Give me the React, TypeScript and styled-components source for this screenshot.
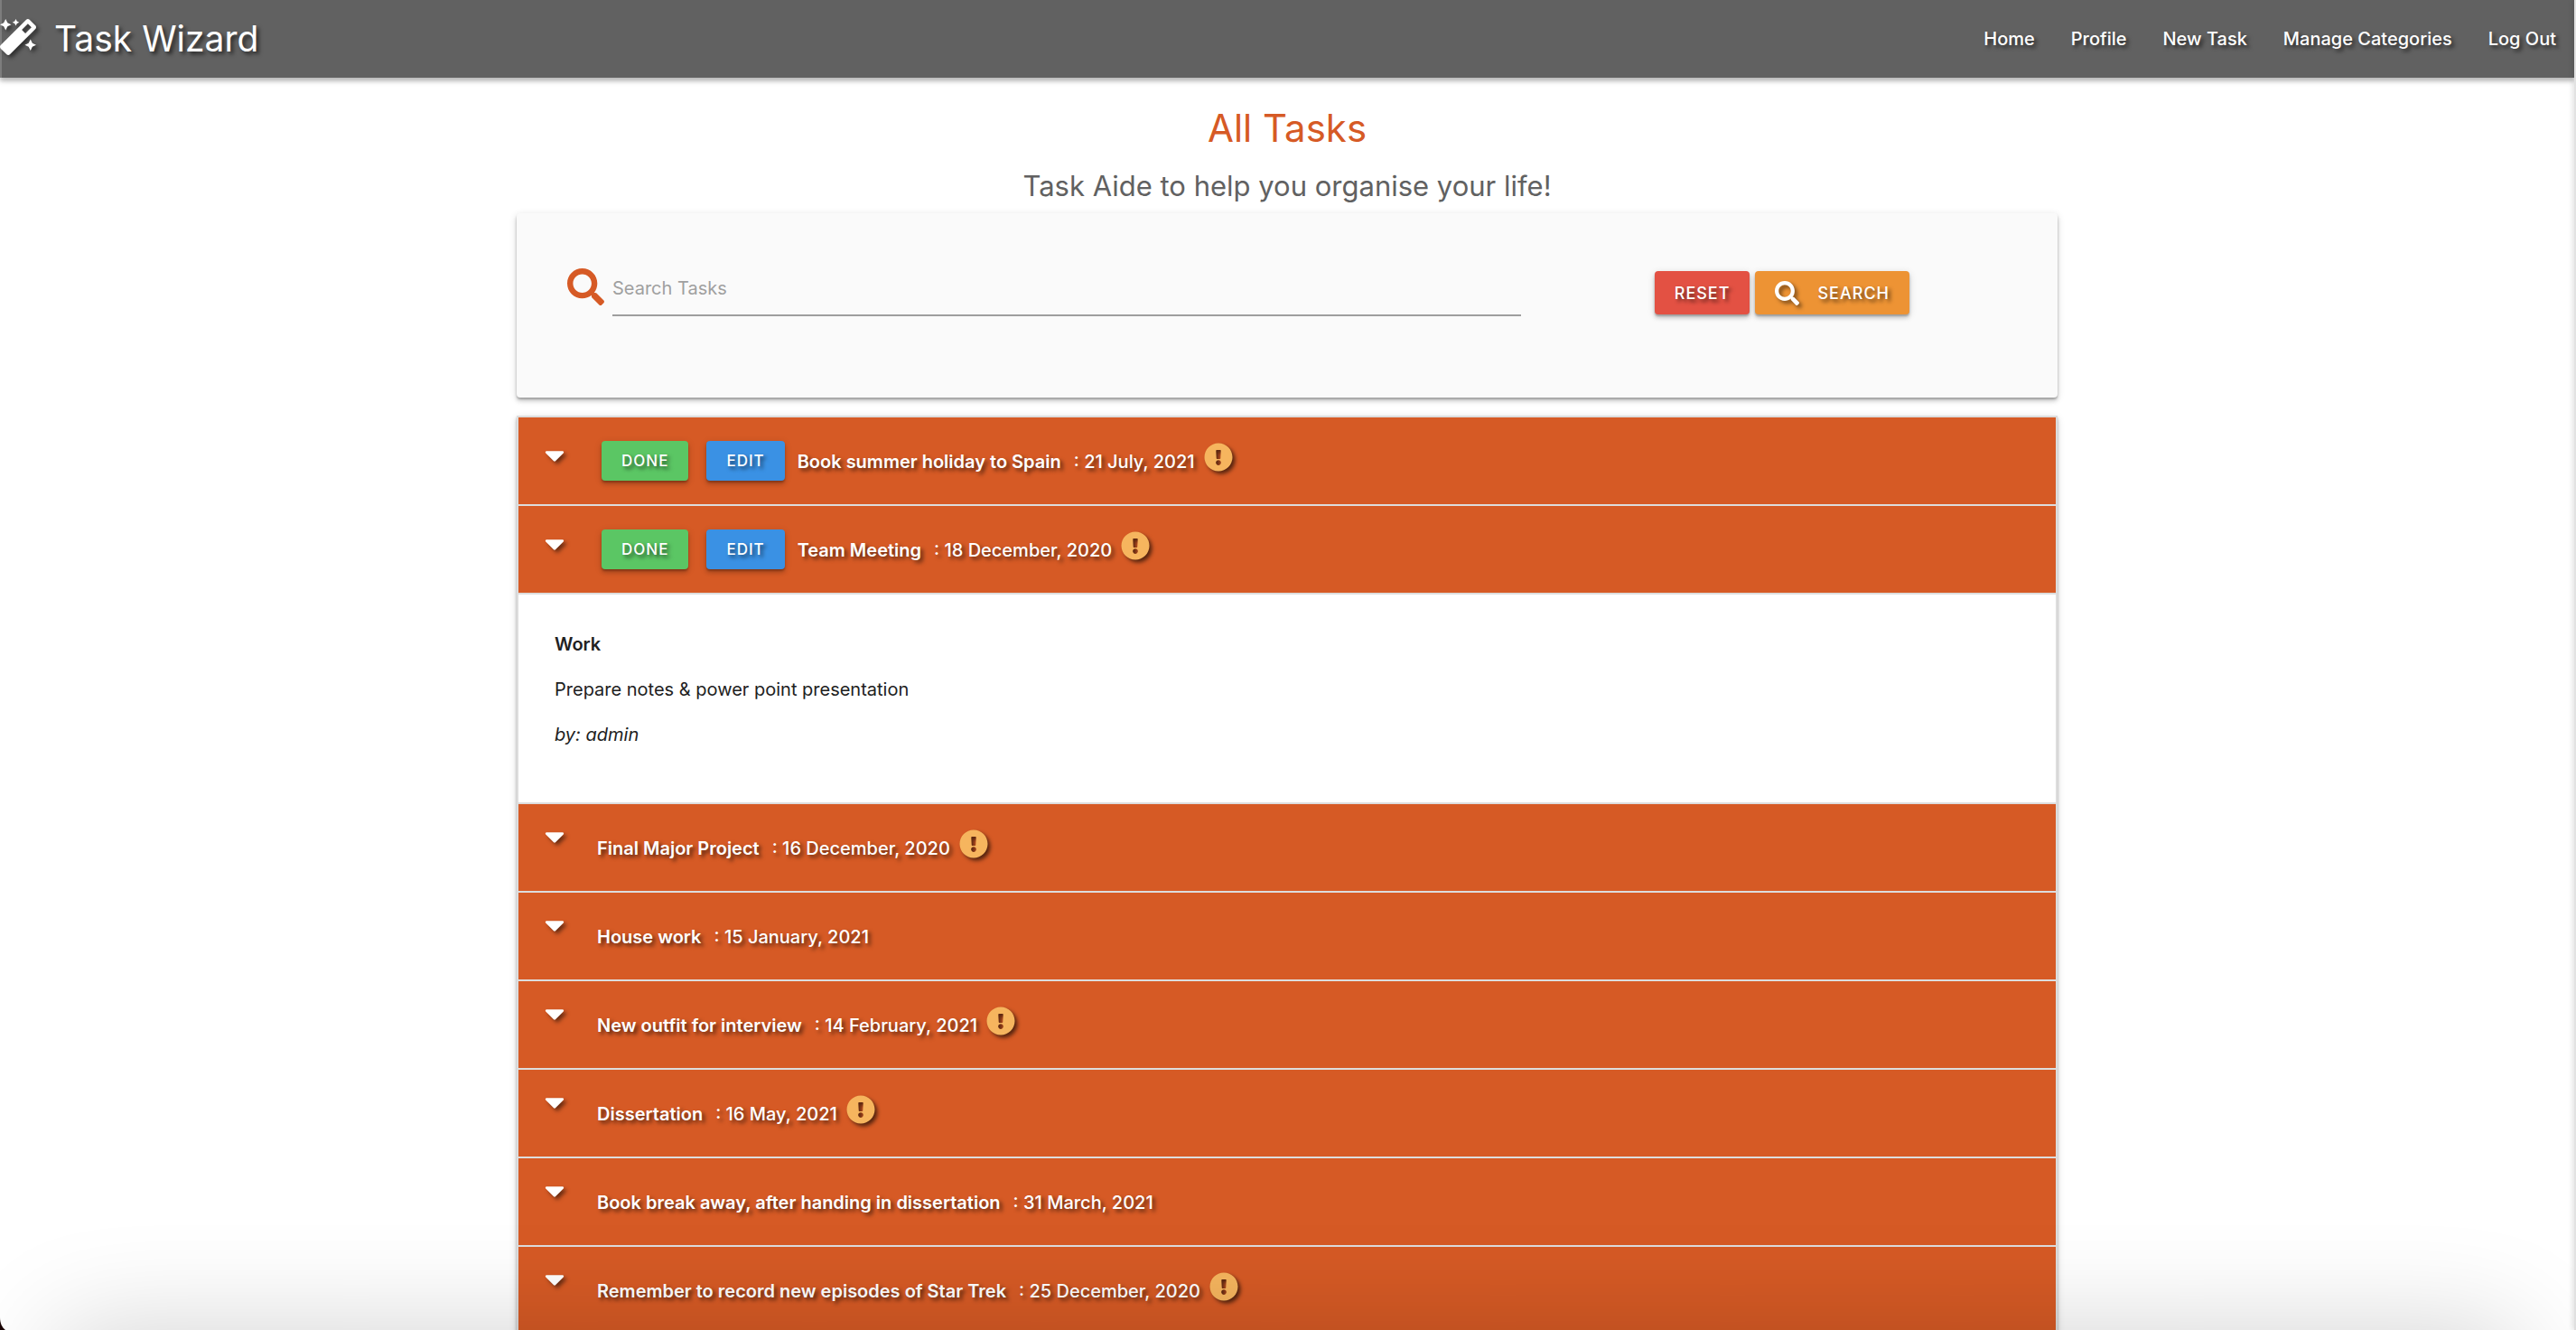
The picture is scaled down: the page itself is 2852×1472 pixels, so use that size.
import React from "react";
import styled, { createGlobalStyle, css } from "styled-components";
import { FaMagic, FaSearch, FaCaretDown, FaExclamationCircle } from "react-icons/fa";

const colors = {
  orange: "#d65a25",
  grey: "#616161",
  line: "#dddddd",
  green: "#5bc664",
  blue: "#3a91e4",
  red: "#e35143",
  amber: "#ed9334",
  badge: "#f6b55e",
};

const GlobalStyle = createGlobalStyle`
  *, *::before, *::after { box-sizing: border-box; }
  html, body { margin: 0; background: #fff; }
  body {
    font-family: Inter, "Liberation Sans", sans-serif;
    font-size: 20px;
    line-height: 30px;
    color: #212121;
  }
`;

const Page = styled.div`
  height: 100vh;
  overflow: hidden;
  padding-right: 2px;
`;

const Nav = styled.nav`
  display: flex;
  align-items: center;
  justify-content: space-between;
  height: 86px;
  background: ${colors.grey};
  color: #fff;
  box-shadow: inset 2px 0 0 #7d7d7d, 0 4px 4px rgba(0, 0, 0, 0.16), 0 2px 8px rgba(0, 0, 0, 0.2);
`;

const Brand = styled.a`
  display: flex;
  align-items: center;
  gap: 20px;
  color: #fff;
  font-size: 39px;
  line-height: 86px;
  text-decoration: none;
  text-shadow: 3px 3px 4px rgba(0, 0, 0, 0.6);

  svg {
    width: 40px;
    height: 40px;
    margin-bottom: 4px;
    filter: drop-shadow(3px 3px 2px rgba(0, 0, 0, 0.5));
  }
`;

const NavLinks = styled.ul`
  display: flex;
  margin: 0;
  padding: 0;
  list-style: none;
`;

const NavLink = styled.a`
  display: block;
  padding: 0 20px;
  color: #fff;
  font-weight: 500;
  line-height: 86px;
  text-decoration: none;
  text-shadow: 3px 3px 4px rgba(0, 0, 0, 0.6);
`;

const Container = styled.main`
  width: 90%;
  max-width: 1706px;
  margin: 0 auto;
`;

const Title = styled.h1`
  margin: 26px 0 0;
  color: ${colors.orange};
  font-size: 42px;
  font-weight: 400;
  line-height: 60px;
  text-align: center;
`;

const Subtitle = styled.h2`
  margin: 14px 0 0;
  color: ${colors.grey};
  font-size: 31px;
  font-weight: 400;
  line-height: 40px;
  text-align: center;
`;

const raised = css`
  box-shadow: 0 4px 4px rgba(0, 0, 0, 0.14), 0 2px 8px rgba(0, 0, 0, 0.14), 0 2px 2px rgba(0, 0, 0, 0.2);
`;

const SearchCard = styled.form`
  display: flex;
  align-items: flex-start;
  height: 204px;
  margin: 10px 0 20px;
  padding: 60px 164px 0 56px;
  border-radius: 4px;
  background: #fafafa;
  ${raised}
`;

const SearchLabel = styled.label`
  display: flex;
  flex: 1;
  gap: 9px;
  margin-right: 148px;
  color: ${colors.orange};

  svg {
    flex: none;
    width: 41px;
    height: 41px;
    margin-top: 1px;
  }
`;

const SearchInput = styled.input`
  flex: 1;
  min-width: 0;
  height: 54px;
  padding: 0 0 6px;
  border: 0;
  border-bottom: 2px solid #9e9e9e;
  outline: 0;
  background: transparent;
  font: inherit;

  &::placeholder {
    color: #a0a0a0;
    opacity: 1;
  }
`;

const Actions = styled.div`
  display: flex;
  gap: 6px;
  padding-top: 4px;
`;

const Button = styled.button<{ $color: string; $small?: boolean }>`
  display: flex;
  align-items: center;
  gap: 20px;
  height: ${(p) => (p.$small ? 44 : 48)}px;
  padding: 0 22px;
  border: 0;
  border-radius: 4px;
  background: ${(p) => p.$color};
  color: #fff;
  font-family: inherit;
  font-size: ${(p) => (p.$small ? 17 : 18)}px;
  font-weight: 500;
  letter-spacing: 1px;
  text-transform: uppercase;
  text-shadow: 3px 3px 4px rgba(0, 0, 0, 0.6);
  cursor: pointer;
  ${raised}

  svg {
    width: 27px;
    height: 27px;
    filter: drop-shadow(3px 3px 2px rgba(0, 0, 0, 0.5));
  }
`;

const TaskList = styled.ul`
  margin: 0;
  padding: 0;
  border: 2px solid ${colors.line};
  list-style: none;
  ${raised}
`;

const TaskHeader = styled.div`
  display: flex;
  align-items: center;
  height: 98px;
  padding: 0 28px;
  border-bottom: 2px solid ${colors.line};
  background: ${colors.orange};
  color: #fff;
  text-shadow: 3px 3px 4px rgba(0, 0, 0, 0.6);
`;

const Toggle = styled.button<{ $own: boolean }>`
  display: flex;
  align-self: flex-start;
  margin: ${(p) => (p.$own ? 24 : 18)}px ${(p) => (p.$own ? 40 : 35)}px 0 0;
  padding: 0;
  border: 0;
  background: none;
  color: #fff;
  cursor: pointer;

  svg {
    width: 24px;
    height: 35px;
    filter: drop-shadow(3px 3px 2px rgba(0, 0, 0, 0.5));
  }
`;

const TaskButtons = styled.div`
  display: flex;
  gap: 20px;
  margin-right: 14px;
`;

const TaskText = styled.div`
  display: flex;
  align-items: center;
  gap: 14px;
  padding-top: 2px;
`;

const TaskName = styled.span`
  font-weight: 600;
`;

const TaskDate = styled.span`
  font-weight: 500;
`;

const Urgent = styled.span`
  display: flex;
  margin: 0 0 10px -4px;
  color: ${colors.badge};

  svg {
    width: 32px;
    height: 32px;
    filter: drop-shadow(3px 3px 2px rgba(0, 0, 0, 0.6));
  }
`;

const TaskBody = styled.div`
  padding: 40px;
  border-bottom: 2px solid ${colors.line};
  background: #fff;

  p {
    margin: 0 0 20px;
  }

  strong {
    font-weight: 600;
  }
`;

const WindowEdge = styled.div`
  position: fixed;
  top: 0;
  right: 0;
  bottom: 0;
  width: 2px;
  background: #e2e2e2;
  box-shadow: 0 0 6px rgba(0, 0, 0, 0.35);
`;

const DockShade = styled.div`
  position: fixed;
  right: 65px;
  bottom: -200px;
  left: 65px;
  height: 200px;
  box-shadow: 0 0 120px rgba(0, 0, 0, 0.18);
  pointer-events: none;
`;

const WindowCorner = styled.svg`
  position: fixed;
  bottom: 0;
  left: 0;
  width: 6px;
  height: 14px;
`;

type Task = {
  name: string;
  date: string;
  own?: boolean;
  urgent?: boolean;
  open?: { category: string; description: string; author: string };
};

const links = ["Home", "Profile", "New Task", "Manage Categories", "Log Out"];

const tasks: Task[] = [
  { name: "Book summer holiday to Spain", date: "21 July, 2021", own: true, urgent: true },
  {
    name: "Team Meeting",
    date: "18 December, 2020",
    own: true,
    urgent: true,
    open: { category: "Work", description: "Prepare notes & power point presentation", author: "admin" },
  },
  { name: "Final Major Project", date: "16 December, 2020", urgent: true },
  { name: "House work", date: "15 January, 2021" },
  { name: "New outfit for interview", date: "14 February, 2021", urgent: true },
  { name: "Dissertation", date: "16 May, 2021", urgent: true },
  { name: "Book break away, after handing in dissertation", date: "31 March, 2021" },
  { name: "Remember to record new episodes of Star Trek", date: "25 December, 2020", urgent: true },
];

function TaskItem({ task }: { task: Task }) {
  const own = Boolean(task.own);
  return (
    <li>
      <TaskHeader>
        <Toggle $own={own} type="button" aria-label={`Toggle ${task.name}`} aria-expanded={Boolean(task.open)}>
          <FaCaretDown />
        </Toggle>
        {own && (
          <TaskButtons>
            <Button type="button" $small $color={colors.green}>Done</Button>
            <Button type="button" $small $color={colors.blue}>Edit</Button>
          </TaskButtons>
        )}
        <TaskText>
          <TaskName>{task.name}</TaskName>
          <TaskDate>: {task.date}</TaskDate>
          {task.urgent && (
            <Urgent>
              <FaExclamationCircle />
            </Urgent>
          )}
        </TaskText>
      </TaskHeader>
      {task.open && (
        <TaskBody>
          <p><strong>{task.open.category}</strong></p>
          <p>{task.open.description}</p>
          <p><em>by: {task.open.author}</em></p>
        </TaskBody>
      )}
    </li>
  );
}

export default function App() {
  return (
    <>
      <GlobalStyle />
      <Page>
        <Nav>
          <Brand href="#">
            <FaMagic />
            Task Wizard
          </Brand>
          <NavLinks>
            {links.map((label) => (
              <li key={label}>
                <NavLink href="#">{label}</NavLink>
              </li>
            ))}
          </NavLinks>
        </Nav>
        <Container>
          <Title>All Tasks</Title>
          <Subtitle>Task Aide to help you organise your life!</Subtitle>
          <SearchCard onSubmit={(e) => e.preventDefault()}>
            <SearchLabel htmlFor="query" aria-label="Search Tasks">
              <FaSearch />
              <SearchInput id="query" name="query" type="text" placeholder="Search Tasks" />
            </SearchLabel>
            <Actions>
              <Button type="reset" $color={colors.red}>Reset</Button>
              <Button type="submit" $color={colors.amber}>
                <FaSearch />
                Search
              </Button>
            </Actions>
          </SearchCard>
          <TaskList>
            {tasks.map((task) => (
              <TaskItem key={task.name} task={task} />
            ))}
          </TaskList>
        </Container>
      </Page>
      <WindowEdge />
      <DockShade />
      <WindowCorner viewBox="0 0 6 14">
        <path d="M0 0C0 6 2 11 6 14H0Z" fill="#1a0505" />
      </WindowCorner>
    </>
  );
}
